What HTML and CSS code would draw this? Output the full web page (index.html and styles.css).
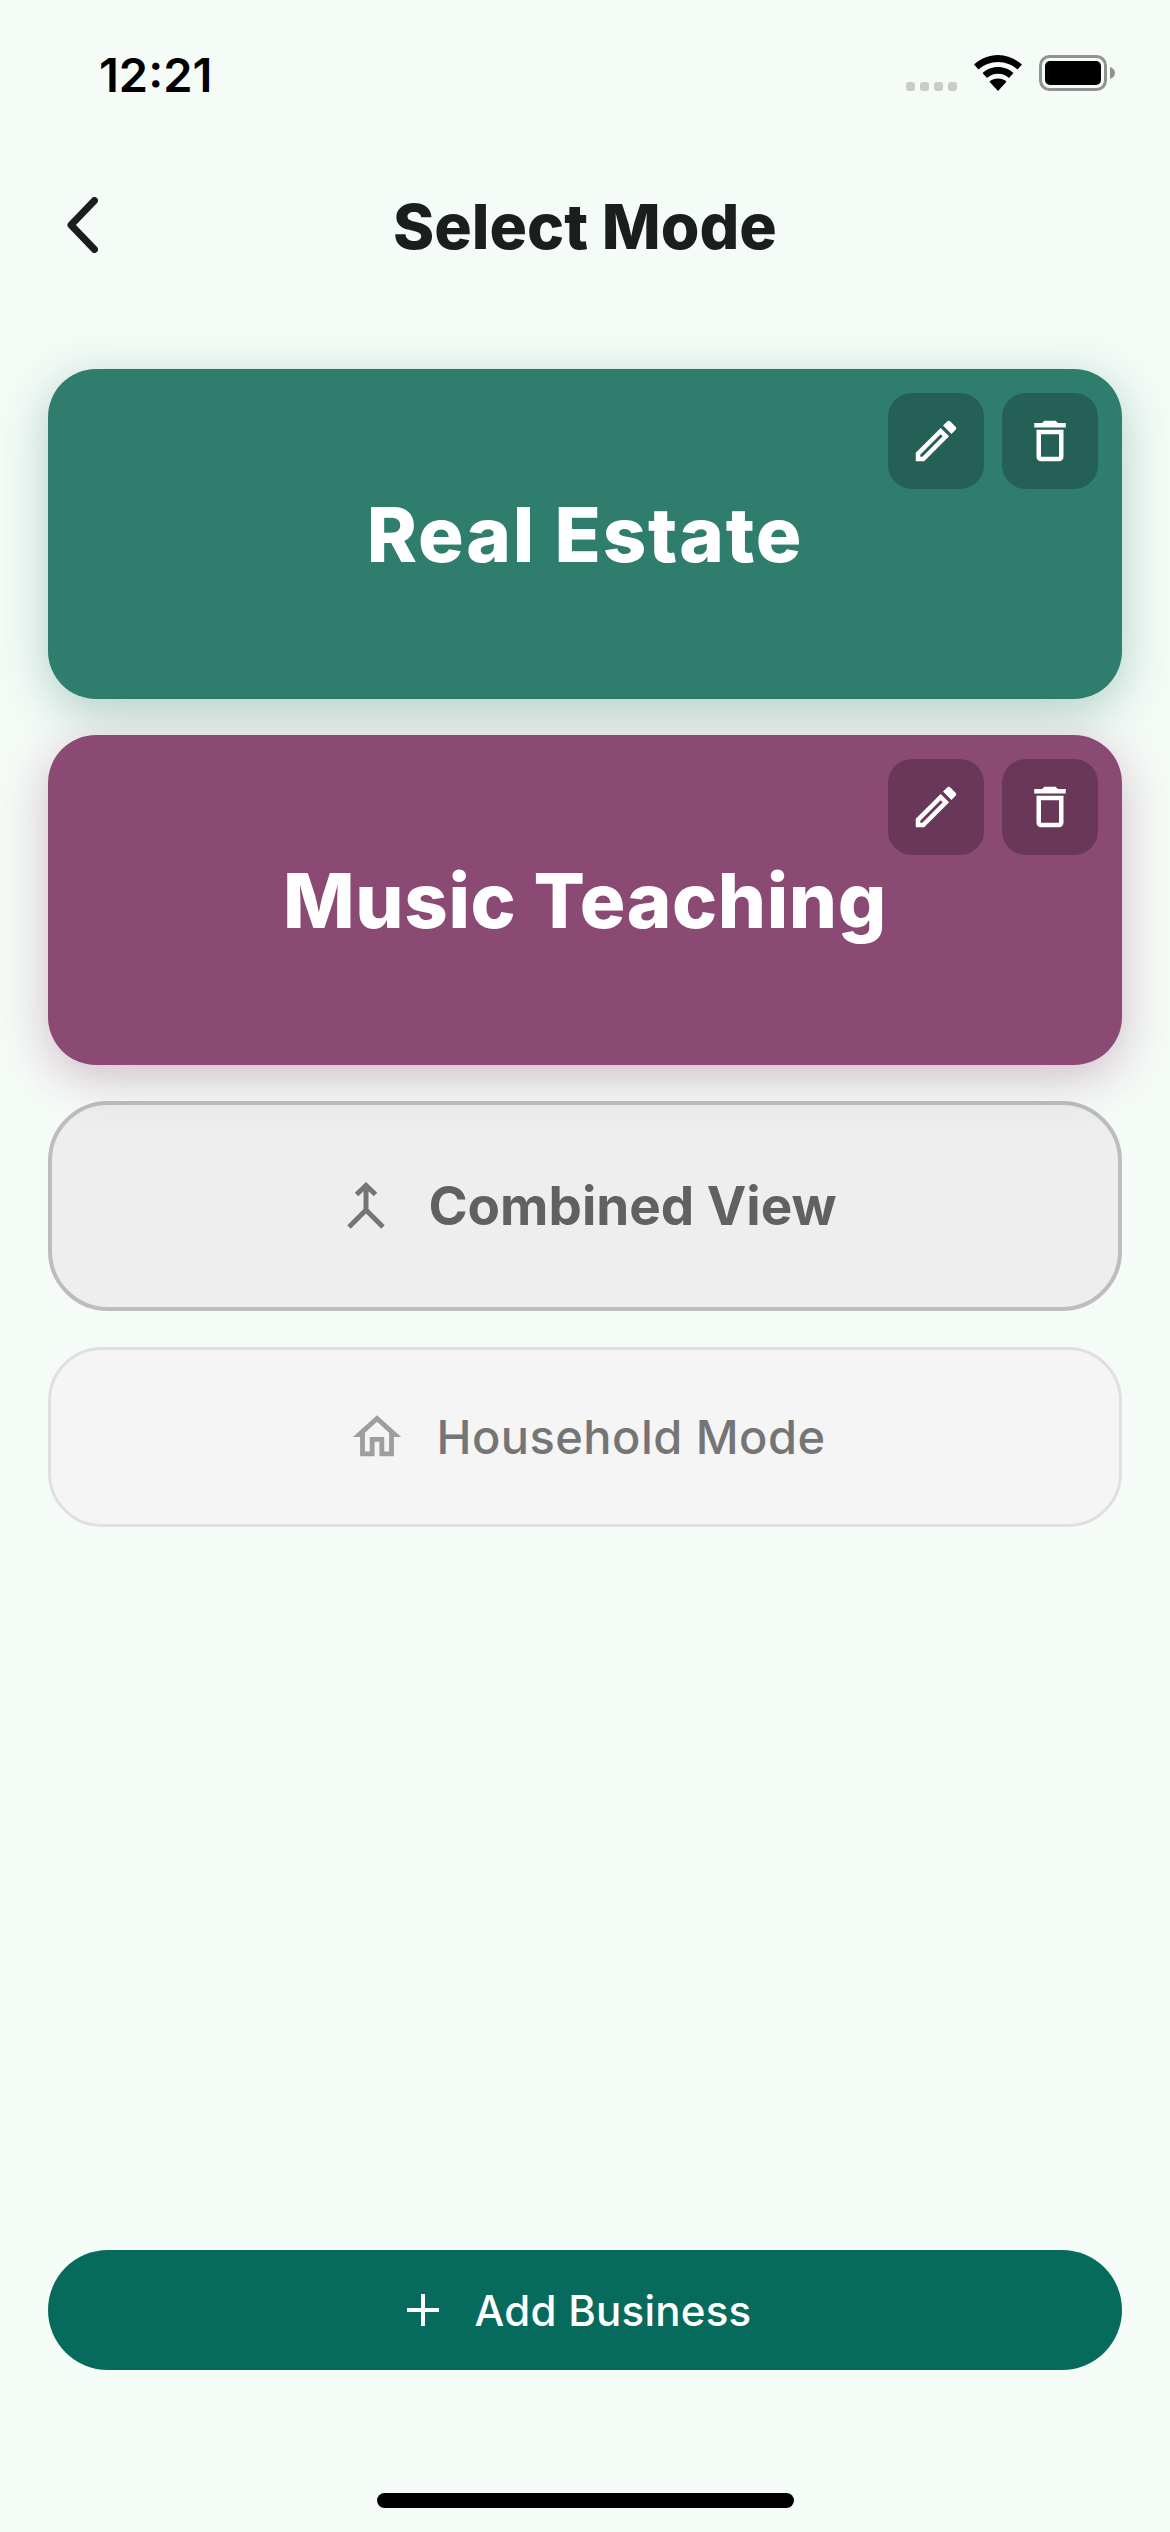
FILE: index.html
```html
<!DOCTYPE html>
<html lang="en">
<head>
<meta charset="utf-8">
<title>Select Mode</title>
<link rel="stylesheet" href="styles.css">
</head>
<body>
<div class="screen">
  <div class="status">
    <span class="time">12:21</span>
    <div class="status-icons">
      <div class="signal"><i></i><i></i><i></i><i></i></div>
      <svg class="wifi" width="48" height="36" viewBox="0 0 48 36"><path d="M24 0C15 0 7 3.500 0 9.500l4.500 5C10 9.800 16.500 7 24 7s14 2.800 19.500 7.500l4.500-5C41 3.500 33 0 24 0z"/><path d="M24 12c-6 0-11.500 2.200-15.500 6l4.500 5c3-2.700 6.800-4.200 11-4.200s8 1.500 11 4.200l4.500-5C35.500 14.200 30 12 24 12z"/><path d="M24 23.500c-3.300 0-6.200 1.200-8.500 3.200L24 36l8.500-9.300c-2.300-2-5.200-3.200-8.500-3.200z"/></svg>
      <svg class="battery" width="76" height="36" viewBox="0 0 76 36"><rect x="1.500" y="1.500" width="65" height="33" rx="9" fill="none" stroke="#8f948f" stroke-width="3"/><rect x="6" y="6" width="56" height="24" rx="5" fill="#000"/><path d="M71 12c3 1 5 3.200 5 6s-2 5-5 6z" fill="#8f948f"/></svg>
    </div>
  </div>

  <header class="topbar">
    <svg class="back" width="31" height="56" viewBox="0 0 31 56"><path d="M27.500 3.500 4 28 27.500 52.500" fill="none" stroke="#1a1f1d" stroke-width="7" stroke-linecap="round" stroke-linejoin="round"/></svg>
    <h1 class="title">Select Mode</h1>
  </header>

  <main class="modes">
    <section class="card card-teal">
      <h2 class="card-name">Real Estate</h2>
      <div class="card-actions">
        <button class="action action-teal"><svg class="icon" width="54" height="54" viewBox="0 0 24 24"><path d="M3 17.250V21h3.750L17.810 9.940l-3.750-3.750L3 17.250zM5.920 19H5v-.92l9.060-9.060.92.92L5.920 19zM20.710 7.040c.39-.39.39-1.020 0-1.410l-2.340-2.340c-.2-.2-.45-.29-.71-.29s-.51.09-.7.28l-1.830 1.830 3.750 3.750 1.830-1.820z"/></svg></button>
        <button class="action action-teal"><svg class="icon" width="54" height="54" viewBox="0 0 24 24"><path d="M16 9v10H8V9h8m-1.500-6h-5l-1 1H5v2h14V4h-3.500l-1-1zM18 7H6v12c0 1.100.9 2 2 2h8c1.100 0 2-.9 2-2V7z"/></svg></button>
      </div>
    </section>

    <section class="card card-purple">
      <h2 class="card-name">Music Teaching</h2>
      <div class="card-actions">
        <button class="action action-purple"><svg class="icon" width="54" height="54" viewBox="0 0 24 24"><path d="M3 17.250V21h3.750L17.810 9.940l-3.750-3.750L3 17.250zM5.920 19H5v-.92l9.060-9.060.92.92L5.920 19zM20.710 7.040c.39-.39.39-1.020 0-1.410l-2.340-2.340c-.2-.2-.45-.29-.71-.29s-.51.09-.7.28l-1.830 1.830 3.750 3.750 1.830-1.820z"/></svg></button>
        <button class="action action-purple"><svg class="icon" width="54" height="54" viewBox="0 0 24 24"><path d="M16 9v10H8V9h8m-1.500-6h-5l-1 1H5v2h14V4h-3.500l-1-1zM18 7H6v12c0 1.100.9 2 2 2h8c1.100 0 2-.9 2-2V7z"/></svg></button>
      </div>
    </section>

    <section class="combined">
      <svg class="merge" width="60" height="54" viewBox="0 0 60 54"><path d="M20.500 15.500 30 6.500l9.500 9M30 7V31M13 48 30 31 47 48" fill="none" stroke="#757575" stroke-width="5"/></svg>
      <span class="combined-label">Combined View</span>
    </section>

    <section class="household">
      <svg class="home" width="58" height="58" viewBox="0 0 24 24"><path d="M12 5.690l5 4.500V18h-2v-6H9v6H7v-7.810l5-4.500M12 3L2 12h3v8h6v-6h2v6h6v-8h3L12 3z"/></svg>
      <span class="household-label">Household Mode</span>
    </section>
  </main>

  <button class="add">
    <svg class="plus" width="32" height="32" viewBox="0 0 32 32"><path d="M16 0V32M0 16H32" stroke="#fff" stroke-width="4"/></svg>
    <span>Add Business</span>
  </button>

  <div class="home-bar"></div>
</div>
</body>
</html>
```
FILE: styles.css
```css
* { box-sizing: border-box; }
html, body { margin: 0; padding: 0; }
body { background: #f5fbf7; font-family: Inter, "Liberation Sans", sans-serif; }

.screen {
  width: 1170px;
  height: 2532px;
  display: flex;
  flex-direction: column;
  background: #f5fbf7;
  overflow: hidden;
}

.status {
  height: 132px;
  padding: 48px 55px 0 99px;
  display: flex;
  justify-content: space-between;
  align-items: flex-start;
}
.time { font-size: 47px; line-height: 54px; font-weight: 600; color: #000; letter-spacing: 0; }
.status-icons { display: flex; align-items: flex-start; padding-top: 7px; }
.signal { display: flex; gap: 5px; margin-top: 27px; margin-right: 17px; }
.signal i { width: 9px; height: 9px; border-radius: 3px; background: #c9ccc9; }
.wifi { fill: #000; margin-right: 17px; }

.topbar {
  position: relative;
  height: 90px;
  margin-top: 49px;
  display: flex;
  align-items: center;
  justify-content: center;
}
.back { position: absolute; left: 67px; top: 16px; }
.title { margin: 0; font-size: 62.500px; line-height: 72px; font-weight: 800; color: #1a1f1d; }

.modes {
  margin-top: 98px;
  padding: 0 48px;
  display: flex;
  flex-direction: column;
  gap: 36px;
}

.card {
  position: relative;
  height: 330px;
  border-radius: 48px;
  display: flex;
  align-items: center;
  justify-content: center;
}
.card-teal { background: #2e7d6d; box-shadow: 0 12px 48px rgba(46, 125, 109, 0.35); }
.card-purple { background: #8b4a73; box-shadow: 0 12px 48px rgba(139, 74, 115, 0.35); }
.card-name { margin: 0; font-size: 76px; line-height: 92px; font-weight: 800; color: #fff; }
.card-teal .card-name { letter-spacing: 1.800px; }
.card-purple .card-name { letter-spacing: 0.600px; }

.card-actions { position: absolute; top: 24px; right: 24px; display: flex; gap: 18px; }
.action {
  width: 96px;
  height: 96px;
  padding: 0;
  border: 0;
  border-radius: 24px;
  display: flex;
  align-items: center;
  justify-content: center;
}
.action-teal { background: #246055; }
.action-purple { background: #693858; }
.icon { fill: #fff; }

.combined {
  height: 210px;
  padding-left: 3px;
  border: 4px solid #bdbdbd;
  border-radius: 60px;
  background: #eeeeee;
  display: flex;
  align-items: center;
  justify-content: center;
  gap: 32px;
}
.combined-label { font-size: 53px; line-height: 64px; font-weight: 700; color: #616161; }

.household {
  height: 180px;
  padding-left: 3px;
  border: 3px solid #e0e0e0;
  border-radius: 54px;
  background: #f5f5f5;
  display: flex;
  align-items: center;
  justify-content: center;
  gap: 31px;
}
.home { fill: #9e9e9e; }
.household-label { font-size: 47px; line-height: 58px; font-weight: 500; color: #757575; letter-spacing: 0.450px; }

.add {
  margin: auto 48px 0;
  height: 120px;
  padding: 0 12px 0 0;
  border: 0;
  border-radius: 60px;
  background: #066b5c;
  color: #fff;
  font-family: inherit;
  font-size: 42px;
  font-weight: 500;
  letter-spacing: 0.250px;
  display: flex;
  align-items: center;
  justify-content: center;
  gap: 36px;
}

.home-bar {
  width: 417px;
  height: 15px;
  margin: 123px auto 24px;
  border-radius: 8px;
  background: #000;
}
```
